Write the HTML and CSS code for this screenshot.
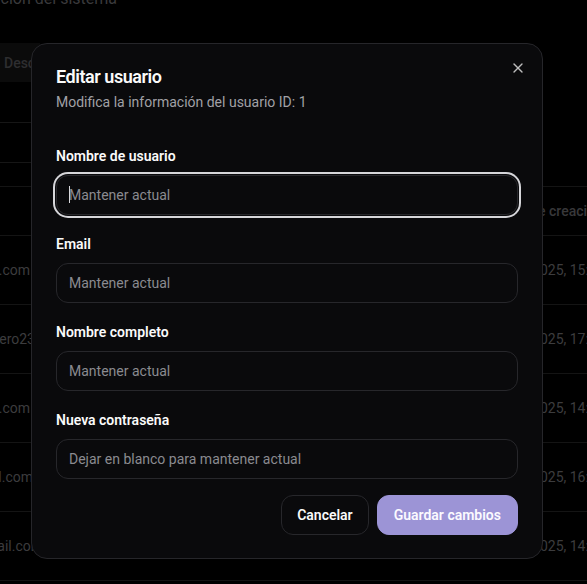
FILE: index.html
```html
<!DOCTYPE html>
<html lang="es">
<head>
<meta charset="utf-8">
<title>Editar usuario</title>
<link rel="stylesheet" href="styles.css">
</head>
<body>
<div class="page">
  <div class="page-sub"><span>Panel de administración del sistema</span></div>
  <div class="tabs"><span class="tab">Descripción general</span></div>
  <div class="search"></div>
  <div class="table">
    <div class="row row-head">
      <div class="c-left"></div>
      <div class="c-mid"></div>
      <div class="c-right">Fecha de creación</div>
    </div>
    <div class="row">
      <div class="c-left"><span>admin@sistema.com</span></div>
      <div class="c-mid"></div>
      <div class="c-right">13/10/2025, 15:32</div>
    </div>
    <div class="row">
      <div class="c-left c-left-cut"><span>luis.romero23</span></div>
      <div class="c-mid"></div>
      <div class="c-right">14/10/2025, 17:05</div>
    </div>
    <div class="row">
      <div class="c-left"><span>maria@empresa.com</span></div>
      <div class="c-mid"></div>
      <div class="c-right">15/10/2025, 14:18</div>
    </div>
    <div class="row">
      <div class="c-left c-left-mid"><span>pedro@gmail.com</span></div>
      <div class="c-mid"></div>
      <div class="c-right">16/10/2025, 16:47</div>
    </div>
    <div class="row">
      <div class="c-left c-left-long"><span>sofia@hotmail.com</span></div>
      <div class="c-mid"></div>
      <div class="c-right">17/10/2025, 14:09</div>
    </div>
  </div>
</div>

<div class="dialog" role="dialog" aria-labelledby="dlg-title">
  <button class="close" type="button" aria-label="Cerrar">
    <svg viewBox="0 0 24 24" width="16" height="16" fill="none" stroke="currentColor" stroke-width="2" stroke-linecap="round" stroke-linejoin="round"><path d="M18 6 6 18"/><path d="m6 6 12 12"/></svg>
  </button>
  <header class="dialog-header">
    <h2 id="dlg-title" class="dialog-title">Editar usuario</h2>
    <p class="dialog-desc">Modifica la información del usuario ID: 1</p>
  </header>
  <form class="form">
    <div class="field">
      <label class="label">Nombre de usuario</label>
      <div class="input-wrap">
        <input class="input is-focused" type="text" placeholder="Mantener actual">
        <span class="caret"></span>
      </div>
    </div>
    <div class="field">
      <label class="label">Email</label>
      <input class="input" type="email" placeholder="Mantener actual">
    </div>
    <div class="field">
      <label class="label">Nombre completo</label>
      <input class="input" type="text" placeholder="Mantener actual">
    </div>
    <div class="field">
      <label class="label">Nueva contraseña</label>
      <input class="input" type="password" placeholder="Dejar en blanco para mantener actual">
    </div>
    <div class="actions">
      <button class="btn btn-outline" type="button">Cancelar</button>
      <button class="btn btn-primary" type="button">Guardar cambios</button>
    </div>
  </form>
</div>
</body>
</html>
```

FILE: styles.css
```css
* { box-sizing: border-box; }

html, body {
  margin: 0;
  padding: 0;
  background: #000;
  overflow: hidden;
  height: 100%;
}

body {
  font-family: Roboto, "Liberation Sans", sans-serif;
  font-size: 14px;
  color: #fafafa;
}

/* ---------- dimmed background page ---------- */
.page {
  margin-top: -13px;
}

.page-sub {
  width: 117px;
  height: 24px;
  display: flex;
  justify-content: flex-end;
  font-size: 16px;
  line-height: 24px;
  color: #3a3a3c;
  white-space: nowrap;
}

.tabs {
  margin-top: 32px;
  height: 39px;
  width: 40px;
  overflow: hidden;
  background: #0b0b0b;
  display: flex;
  align-items: center;
  padding-left: 4px;
  white-space: nowrap;
}

.tab {
  font-size: 14px;
  font-weight: 500;
  color: #2e2e30;
}

.search {
  margin-top: 40px;
  height: 41px;
  width: 300px;
  border-top: 1px solid #161616;
  border-bottom: 1px solid #161616;
}

.table {
  margin-top: 23px;
  border-top: 1px solid #141414;
}

.row {
  display: flex;
  align-items: center;
  height: 69px;
  border-bottom: 1px solid #141414;
  color: #3c3c3e;
  white-space: nowrap;
}

.row-head {
  height: 49px;
  font-weight: 500;
  color: #38383a;
}

.c-left {
  width: 30px;
  display: flex;
  justify-content: flex-end;
  flex: none;
}

.c-left-cut { width: 35px; }
.c-left-mid { width: 33px; }
.c-left-long { width: 43px; }

.c-mid { flex: 1; }

.c-right {
  width: 98px;
  flex: none;
}

/* ---------- dialog ---------- */
.dialog {
  position: fixed;
  left: 31px;
  top: 43px;
  width: 512px;
  background: #0a0a0c;
  border: 1px solid #26262a;
  border-radius: 16px;
  padding: 24px 24px 23px;
}

.close {
  position: absolute;
  top: 16px;
  right: 16px;
  width: 16px;
  height: 16px;
  padding: 0;
  border: 0;
  background: transparent;
  color: #fafafa;
  opacity: 0.75;
  display: flex;
}

.dialog-header {
  display: flex;
  flex-direction: column;
  gap: 6px;
}

.dialog-title {
  margin: 0;
  font-size: 18px;
  line-height: 18px;
  font-weight: 600;
  letter-spacing: -0.45px;
  color: #fafafa;
}

.dialog-desc {
  margin: 0;
  font-size: 14px;
  line-height: 20px;
  color: #a1a1a6;
}

.form {
  margin-top: 34px;
  display: flex;
  flex-direction: column;
  gap: 19px;
}

.field {
  display: flex;
  flex-direction: column;
  gap: 9px;
}

.label {
  font-size: 14px;
  line-height: 20px;
  font-weight: 600;
  color: #fafafa;
}

.input-wrap {
  position: relative;
  display: flex;
}

.input {
  width: 100%;
  height: 40px;
  border: 1px solid #27272b;
  border-radius: 12px;
  background: #0a0a0c;
  padding: 0 12px;
  font-family: inherit;
  font-size: 14px;
  color: #fafafa;
  outline: none;
}

.input::placeholder {
  color: #8b8b90;
  opacity: 1;
}

.input.is-focused {
  box-shadow: 0 0 0 1px #0a0a0c, 0 0 0 3px #d6d6da;
}

.caret {
  position: absolute;
  left: 13px;
  top: 11px;
  width: 1px;
  height: 17px;
  background: #d8d8dc;
}

.actions {
  margin-top: -3px;
  display: flex;
  justify-content: flex-end;
  gap: 8px;
}

.btn {
  height: 40px;
  border-radius: 12px;
  font-family: inherit;
  font-size: 14px;
  font-weight: 600;
  line-height: 20px;
  cursor: pointer;
}

.btn-outline {
  padding: 0 15px;
  background: #0a0a0c;
  border: 1px solid #27272b;
  color: #fafafa;
}

.btn-primary {
  padding: 0 16px;
  background: #9c94d6;
  border: 1px solid #9c94d6;
  color: #fbfaff;
}
```
